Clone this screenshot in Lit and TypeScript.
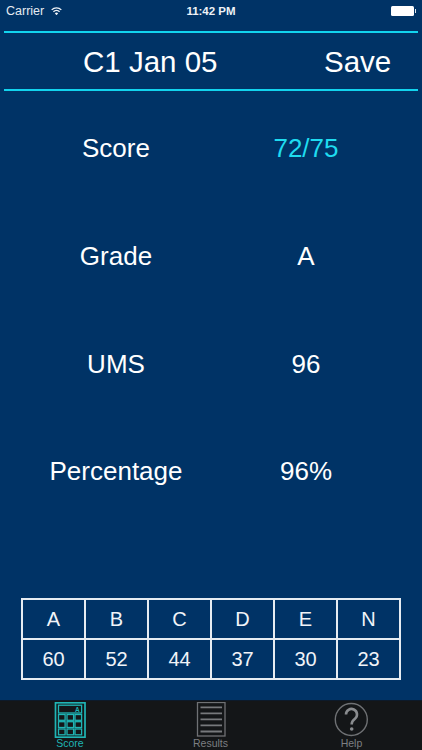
import { LitElement, html, css, svg } from "lit";
import { customElement } from "lit/decorators.js";

const rows = [
  ["Score", "72/75", true],
  ["Grade", "A", false],
  ["UMS", "96", false],
  ["Percentage", "96%", false],
] as const;
const grades = ["A", "B", "C", "D", "E", "N"];
const marks = ["60", "52", "44", "37", "30", "23"];

const calcKeys = [12.5, 19.7, 27].flatMap((y) =>
  [4.5, 13, 21].map((x) => svg`<rect x="${x}" y="${y}" width="6.6" height="5.8" />`)
);

@customElement("app-root")
export class AppRoot extends LitElement {
  static styles = css`
    :host {
      display: flex;
      flex-direction: column;
      width: 422px;
      height: 750px;
      overflow: hidden;
      background: #003366;
      color: #fff;
      font-family: "Liberation Sans", Arial, sans-serif;
    }
    .status {
      height: 31px;
      flex: none;
      display: grid;
      grid-template-columns: 1fr auto 1fr;
      align-items: center;
      padding: 0 6px 9px;
      font-size: 12.5px;
      box-sizing: border-box;
    }
    .status .left {
      display: flex;
      align-items: center;
      gap: 7px;
      color: #e6ebf1;
    }
    .status .time {
      font-size: 11.5px;
      font-weight: bold;
      color: #eef2f6;
    }
    .status .right {
      display: flex;
      justify-content: flex-end;
      align-items: center;
    }
    .batt {
      width: 22.5px;
      height: 10px;
      background: #fff;
      border-radius: 1.5px;
    }
    .nub {
      width: 1.5px;
      height: 4px;
      margin-left: 1px;
      background: #dfe6ee;
    }
    .head {
      flex: none;
      margin: 0 4px;
      height: 60px;
      box-sizing: border-box;
      border-top: 2px solid #12d4ee;
      border-bottom: 2px solid #12d4ee;
      display: flex;
      align-items: center;
      font-size: 29.5px;
      padding-top: 2px;
    }
    .title {
      margin-left: 79px;
      width: 241px;
    }
    .rows {
      flex: none;
      margin-top: 4px;
      display: grid;
      grid-template-columns: 232px 148px;
      grid-auto-rows: 107.7px;
      align-items: center;
      justify-items: center;
      font-size: 26px;
    }
    .hi {
      color: #1fdcf0;
    }
    table {
      flex: none;
      margin: 72px 0 0 21px;
      width: 380px;
      height: 82px;
      border-collapse: collapse;
      table-layout: fixed;
      font-size: 20px;
      color: #f1f4f8;
    }
    td {
      border: 2px solid #e6ecf2;
      text-align: center;
      padding: 2px 0 0;
    }
    nav {
      margin-top: auto;
      flex: none;
      height: 50px;
      background: #141618;
      border-top: 1px solid #0d1a2a;
      box-sizing: border-box;
      display: grid;
      grid-template-columns: 140px 141px 141px;
      padding: 1px 0 0;
      font-size: 10.5px;
      color: #7d7f82;
    }
    .tab {
      display: flex;
      flex-direction: column;
      align-items: center;
      line-height: 10px;
    }
    .tab svg {
      display: block;
      height: 36px;
      width: 36px;
    }
    .tab.on {
      color: #1fb5b5;
    }
  `;

  render() {
    return html`
      <div class="status">
        <div class="left">
          Carrier
          <svg width="11" height="8.5" viewBox="0 0 13 10" fill="none" stroke="#f0f4f8" stroke-width="1.6">
            <path d="M.8 3.4a8 8 0 0 1 11.4 0" />
            <path d="M2.9 5.5a5 5 0 0 1 7.2 0" />
            <path d="M6.5 9.8 4.5 7.5a2.8 2.8 0 0 1 4 0z" fill="#f0f4f8" stroke="none" />
          </svg>
        </div>
        <div class="time">11:42 PM</div>
        <div class="right"><div class="batt"></div><div class="nub"></div></div>
      </div>
      <div class="head"><span class="title">C1 Jan 05</span><span>Save</span></div>
      <div class="rows">
        ${rows.map(
          ([k, v, hi]) => html`<div>${k}</div><div class="${hi ? "hi" : ""}">${v}</div>`
        )}
      </div>
      <table>
        <tr>${grades.map((g) => html`<td>${g}</td>`)}</tr>
        <tr>${marks.map((m) => html`<td>${m}</td>`)}</tr>
      </table>
      <nav>
        <div class="tab on">
          <svg viewBox="0 0 32 36" fill="none" stroke="#1fb5b5" stroke-width="1.3">
            <rect x="1.5" y="0.8" width="29.5" height="34.4" stroke-width="1.7" />
            <rect x="4.5" y="3.2" width="23.1" height="7.8" />
            ${calcKeys}
            <text x="21" y="10" font-size="6.5" font-weight="bold" fill="#1fb5b5" stroke="none">A</text>
          </svg>
          Score
        </div>
        <div class="tab">
          <svg viewBox="0 0 32 36" fill="none" stroke="#6f7174">
            <rect x="2.5" y="0.5" width="27.5" height="33.5" stroke-width="1.3" />
            <path d="M5.5 5.3H27M5.5 11.3H27M5.5 17.3H27M5.5 23.3H27M5.5 29.5H27" stroke-width="1.8" stroke="#77797c" />
          </svg>
          Results
        </div>
        <div class="tab">
          <svg viewBox="0 0 36 36" fill="none" stroke="#6f7174">
            <circle cx="17.3" cy="17.5" r="16" stroke-width="1.4" />
            <path d="M12 12.5a5.5 5.5 0 1 1 9 4.2c-2 1.6-3.3 2.6-3.3 5.3v.6" stroke-width="2.6" stroke="#8a8c8f" />
            <circle cx="17.7" cy="27" r="1.8" fill="#8a8c8f" stroke="none" />
          </svg>
          Help
        </div>
      </nav>
    `;
  }
}
